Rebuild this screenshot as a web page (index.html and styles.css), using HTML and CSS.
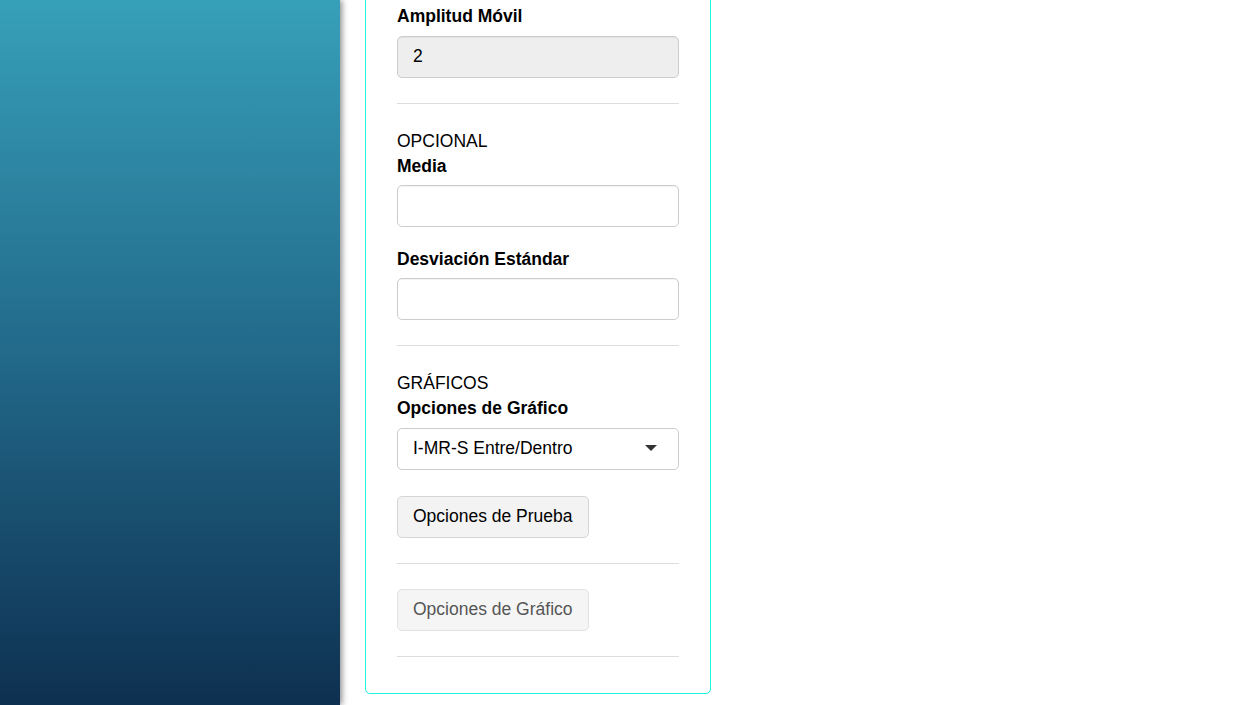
FILE: index.html
```html
<!DOCTYPE html>
<html lang="es">
<head>
<meta charset="utf-8">
<title>Opciones</title>
<link rel="stylesheet" href="styles.css">
</head>
<body>
<div class="layout">
  <aside class="sidebar"></aside>
  <main class="main">
    <div class="card">
      <div class="form-group first-group">
        <label class="label">Amplitud Móvil</label>
        <input class="input" type="text" value="2" disabled>
      </div>
      <hr class="rule">
      <div class="section-title">OPCIONAL</div>
      <div class="form-group">
        <label class="label">Media</label>
        <input class="input" type="text">
      </div>
      <div class="form-group">
        <label class="label">Desviación Estándar</label>
        <input class="input" type="text">
      </div>
      <hr class="rule">
      <div class="section-title">GRÁFICOS</div>
      <div class="form-group select-group">
        <label class="label">Opciones de Gráfico</label>
        <div class="select">
          <span>I-MR-S Entre/Dentro</span>
          <span class="caret"></span>
        </div>
      </div>
      <div class="btn-row">
        <button class="btn">Opciones de Prueba</button>
      </div>
      <hr class="rule">
      <div>
        <button class="btn btn-disabled" disabled>Opciones de Gráfico</button>
      </div>
      <hr class="rule">
    </div>
  </main>
</div>
</body>
</html>
```
FILE: styles.css
```css
* { box-sizing: border-box; }
html, body {
  margin: 0;
  padding: 0;
  height: 100%;
  overflow: hidden;
  background: #fff;
}
body {
  font-family: "Liberation Sans", Arial, sans-serif;
  font-size: 17.5px;
  line-height: 25px;
  color: #000;
}
.layout {
  display: flex;
  height: 705px;
}
.sidebar {
  width: 340px;
  flex: none;
  height: 100%;
  background: linear-gradient(180deg, #37a0b9 0%, #22698a 50%, #0e3050 100%);
  box-shadow: 2px 0 6px rgba(0, 0, 0, 0.45);
  position: relative;
  z-index: 1;
}
.main {
  padding-left: 25px;
}
.card {
  width: 346px;
  margin-top: -28px;
  border: 1px solid #1cf7dc;
  border-radius: 5px;
  padding: 31px 31px 11px 31px;
}
.form-group {
  margin-bottom: 20px;
}
.label {
  display: block;
  font-weight: bold;
  margin-bottom: 6px;
}
.first-group .label,
.select-group .label {
  margin-bottom: 7px;
}
.input {
  display: block;
  width: 100%;
  height: 42px;
  border: 1px solid #cccccc;
  border-radius: 5px;
  padding: 0 15px 2px 15px;
  font-family: inherit;
  font-size: 17.5px;
  color: #000;
  background: #fff;
  box-shadow: inset 0 1px 1px rgba(0, 0, 0, 0.05);
}
.input:disabled {
  background: #eeeeee;
  color: #000;
  -webkit-text-fill-color: #000;
  opacity: 1;
}
.rule {
  border: 0;
  border-top: 1px solid #dddddd;
  margin: 25px 0;
}
.section-title {
  font-weight: normal;
}
.select {
  display: flex;
  align-items: center;
  justify-content: space-between;
  height: 42px;
  border: 1px solid #cccccc;
  border-radius: 5px;
  padding: 0 21px 2px 15px;
  background: #fff;
}
.caret {
  width: 0;
  height: 0;
  border-left: 6px solid transparent;
  border-right: 6px solid transparent;
  border-top: 6px solid #333;
}
.btn-row {
  padding-top: 6px;
}
.btn {
  display: inline-block;
  height: 42px;
  padding: 0 15px 2px 15px;
  border: 1px solid #d5d5d5;
  border-radius: 5px;
  background: #f3f3f3;
  font-family: inherit;
  font-size: 17.5px;
  color: #000;
}
.btn-disabled {
  color: #555;
  background: #f5f5f5;
  border-color: #e2e2e2;
}
```
